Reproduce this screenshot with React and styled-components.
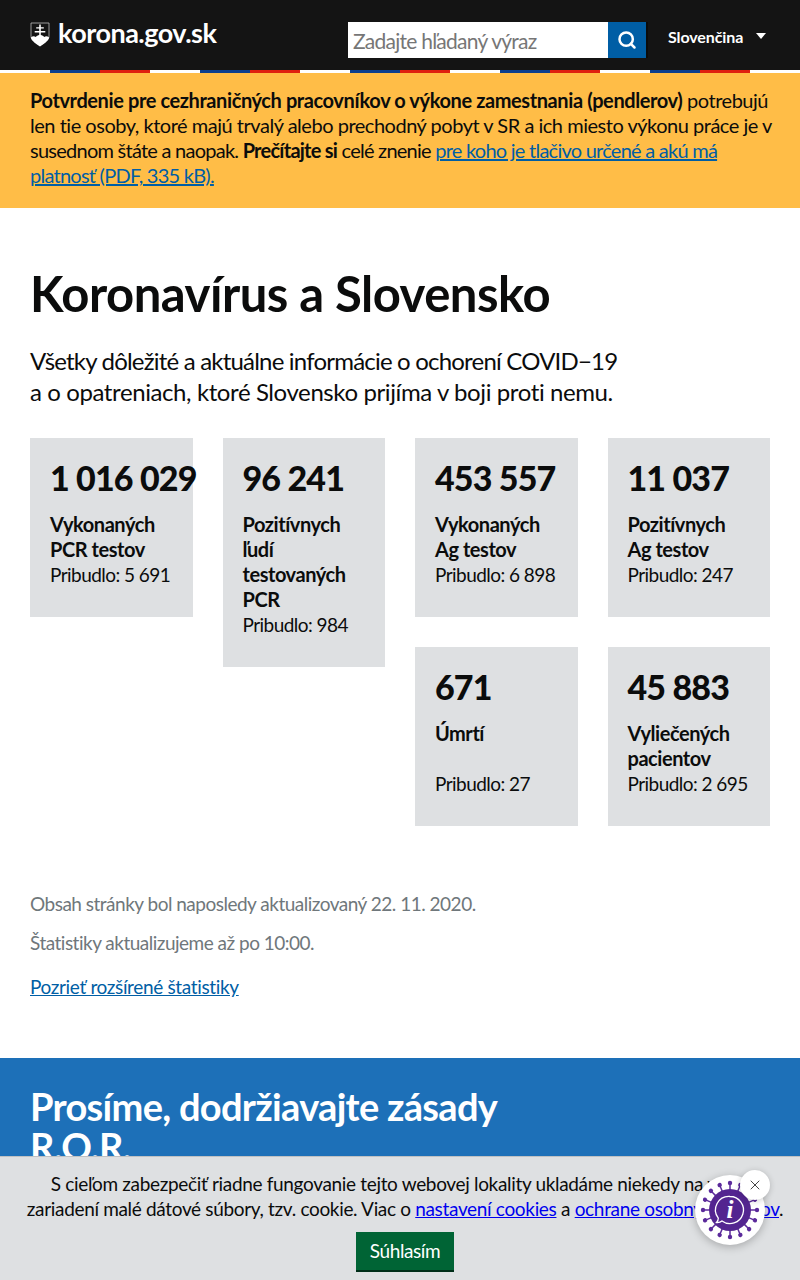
import React from "react";
import styled, { createGlobalStyle } from "styled-components";
import { Search, X } from "lucide-react";

const GlobalStyle = createGlobalStyle`
  html, body {
    margin: 0;
    padding: 0;
    background: #fff;
    color: #0b0c0c;
    font-family: Lato, "Noto Sans", sans-serif;
    font-size: 20px;
    line-height: 25px;
    letter-spacing: -0.45px;
  }
  * { box-sizing: border-box; }
`;

const Page = styled.div`
  position: relative;
  height: 1280px;
  overflow: hidden;
`;

const Header = styled.header`
  height: 70px;
  padding: 22px 30px 0;
  display: flex;
  align-items: flex-start;
  background: #141414;
`;

const Stripe = styled.div`
  height: 3px;
  background: repeating-linear-gradient(
    90deg,
    #fff 0 50px,
    #0b3e8f 50px 100px,
    #df2010 100px 150px
  );
`;

const Logo = styled.a`
  display: flex;
  align-items: center;
  gap: 8px;
  height: 24px;
  margin-top: -2px;
  color: #fff;
  font-size: 27px;
  font-weight: 700;
  letter-spacing: -0.5px;
  svg { margin-top: 4px; }
`;

const SearchForm = styled.form`
  display: flex;
  margin-left: auto;
  margin-right: 22px;
  box-shadow: 2px 0 0 #0b0c0c;
`;

const SearchInput = styled.input`
  width: 260px;
  height: 36px;
  padding: 0 5px;
  border: 0;
  border-radius: 0;
  background: #fff;
  font: 21px Lato, sans-serif;
  letter-spacing: -0.75px;
  &::placeholder { color: #767676; opacity: 1; }
`;

const SearchButton = styled.button`
  width: 38px;
  height: 36px;
  display: flex;
  align-items: center;
  justify-content: center;
  padding: 0;
  border: 0;
  background: #005ea5;
  color: #fff;
`;

const Language = styled.div`
  display: flex;
  align-items: center;
  gap: 13px;
  width: 102px;
  height: 28px;
  color: #fff;
  font-size: 16px;
  font-weight: 700;
  letter-spacing: -0.1px;
`;

const Caret = styled.span`
  width: 0;
  height: 0;
  border-left: 5px solid transparent;
  border-right: 5px solid transparent;
  border-top: 6px solid #fff;
  margin-top: -1px;
`;

const Notice = styled.section`
  padding: 15px 30px 20px;
  background: #ffbd47;
  white-space: nowrap;
  letter-spacing: -0.48px;
  b { letter-spacing: -0.4px; }
  a { color: #005ea5; }
`;

const TightText = styled.span`
  letter-spacing: -0.75px;
  b { letter-spacing: -0.75px; }
`;

const Main = styled.main`
  padding: 55px 30px 0;
`;

const Title = styled.h1`
  margin: 0;
  font-size: 49px;
  line-height: 60px;
  font-weight: 700;
  letter-spacing: -0.5px;
`;

const Lead = styled.p`
  margin: 22px 0 0;
  font-size: 24px;
  line-height: 31px;
`;

const LeadLine = styled.span`
  display: block;
  letter-spacing: ${(p) => (p.$tight ? "-0.8px" : "-0.4px")};
`;

const Stats = styled.div`
  display: grid;
  grid-template-columns: minmax(0, 1fr) minmax(0, 1fr);
  gap: 30px;
  margin-top: 31px;
`;

const StatGroup = styled.div`
  display: grid;
  grid-template-columns: minmax(0, 1fr) minmax(0, 1fr);
  gap: 30px;
  align-items: start;
`;

const StatCard = styled.div`
  padding: 20px 0 30px 20px;
  background: #dee0e2;
`;

const StatNumber = styled.div`
  height: 42px;
  margin-bottom: 12px;
  font-size: 34px;
  line-height: 40px;
  font-weight: 900;
  white-space: nowrap;
  letter-spacing: -0.85px;
`;

const StatLabel = styled.div`
  min-height: ${(p) => p.$lines * 25}px;
  font-weight: 700;
`;

const StatMore = styled.div`
  font-size: 19px;
  letter-spacing: -0.55px;
  white-space: nowrap;
`;

const Meta = styled.p`
  margin: ${(p) => p.$gap}px 0 0;
  color: #6f777b;
  font-size: 19px;
  letter-spacing: -0.5px;
`;

const BlueLink = styled.a`
  display: block;
  margin-top: 19px;
  color: #005ea5;
  font-size: 19px;
  letter-spacing: -0.35px;
  text-decoration: underline;
`;

const Rules = styled.section`
  margin-top: 59px;
  padding: 28px 30px 0;
  background: #1d70b8;
  color: #fff;
  height: 240px;
`;

const RulesTitle = styled.h2`
  margin: 0;
  max-width: 500px;
  font-size: 38px;
  line-height: 40px;
  font-weight: 700;
  letter-spacing: -0.7px;
`;

const CookieBar = styled.div`
  position: absolute;
  left: 0;
  right: 0;
  bottom: 0;
  height: 124px;
  padding: 14px 0 0 10px;
  background: #dee0e2;
  border-top: 1px solid #bfc1c3;
  text-align: center;
  font-size: 19px;
  letter-spacing: -0.33px;
  white-space: nowrap;
  a { color: #00e; }
`;

const AgreeButton = styled.button`
  display: block;
  width: 98px;
  height: 40px;
  margin: 11px auto 0;
  padding: 0;
  border: 0;
  border-bottom: 2px solid #002d18;
  background: #006435;
  color: #fff;
  font: 19px/38px Lato, sans-serif;
  letter-spacing: -0.4px;
`;

const InfoBubble = styled.button`
  position: absolute;
  left: 695px;
  top: 1175px;
  width: 70px;
  height: 70px;
  padding: 0;
  display: flex;
  align-items: center;
  justify-content: center;
  border: 0;
  border-radius: 50%;
  background: #fff;
  box-shadow: 0 2px 8px rgba(0, 0, 0, 0.25);
`;

const CloseBubble = styled.button`
  position: absolute;
  left: 740px;
  top: 1170px;
  width: 30px;
  height: 30px;
  padding: 0;
  display: flex;
  align-items: center;
  justify-content: center;
  border: 0;
  border-radius: 50%;
  background: #fff;
  color: #444;
  box-shadow: 0 1px 6px rgba(0, 0, 0, 0.2);
`;

const stats = [
  [
    { n: "1 016 029", label: ["Vykonaných", "PCR testov"], more: "5 691" },
    { n: "96 241", label: ["Pozitívnych", "ľudí", "testovaných", "PCR"], more: "984" },
  ],
  [
    { n: "453 557", label: ["Vykonaných", "Ag testov"], more: "6 898" },
    { n: "11 037", label: ["Pozitívnych", "Ag testov"], more: "247" },
    { n: "671", label: ["Úmrtí"], lines: 2, more: "27" },
    { n: "45 883", label: ["Vyliečených", "pacientov"], more: "2 695" },
  ],
];

const Crest = () => (
  <svg width="20" height="25" viewBox="0 0 20 25">
    <path d="M1 1h18v13c0 4-4 6-9 9.500C5 20 1 18 1 14z" fill="none" stroke="#bbb" strokeWidth="0.8" />
    <path d="M0.800 15.500c2-1.500 3.500-1.500 5-.5 1-1.500 3-2 4.200-2s3.200.5 4.200 2c1.500-1 3-1 5 .5C18 19.500 14 21.500 10 24.500 6 21.500 2 19.500.8 15.500z" fill="#fff" />
    <path d="M9.200 2.500h1.600v2.700h3v1.400h-3v2.400h4.500v1.400h-4.500v3.600H9.200V10.400H4.700V9h4.500V6.600h-3V5.200h3z" fill="#fff" />
  </svg>
);

const spikes = Array.from({ length: 16 }, (_, i) => (i * 360) / 16);

const VirusIcon = () => (
  <svg width="60" height="60" viewBox="0 0 60 60">
    {spikes.map((a) => (
      <g key={a} transform={`rotate(${a} 30 30)`}>
        <line x1="30" y1="10" x2="30" y2="3.500" stroke="#5b2a9b" strokeWidth="1.500" />
        <circle cx="30" cy="3" r="2.200" fill="#5b2a9b" />
      </g>
    ))}
    <circle cx="30" cy="30" r="21" fill="#532590" />
    <path
      d="M30 16.500a13.500 13.500 0 1 1-8 24.400c-1.500 1.300-3.500 1.800-5.500 1.600 1.200-1.200 1.800-2.600 1.800-4.300A13.500 13.500 0 0 1 30 16.500z"
      fill="none"
      stroke="#fff"
      strokeWidth="1.300"
    />
    <text x="30" y="38" textAnchor="middle" fontFamily="Liberation Serif, serif" fontStyle="italic" fontWeight="700" fontSize="25" fill="#fff">
      i
    </text>
  </svg>
);

const App = () => (
  <Page>
    <GlobalStyle />
    <Header>
      <Logo>
        <Crest />
        korona.gov.sk
      </Logo>
      <SearchForm>
        <SearchInput placeholder="Zadajte hľadaný výraz" />
        <SearchButton type="button" aria-label="Hľadať">
          <Search size={20} strokeWidth={3} />
        </SearchButton>
      </SearchForm>
      <Language>
        Slovenčina
        <Caret />
      </Language>
    </Header>
    <Stripe />

    <Notice>
      <b>Potvrdenie pre cezhraničných pracovníkov o výkone zamestnania (pendlerov)</b> potrebujú
      <br />
      len tie osoby, ktoré majú trvalý alebo prechodný pobyt v SR a ich miesto výkonu práce je v
      <br />
      <TightText>
        susednom štáte a naopak. <b>Prečítajte si</b> celé znenie{" "}
        <a href="#pdf">
          pre koho je tlačivo určené a akú má
          <br />
          platnosť (PDF, 335 kB).
        </a>
      </TightText>
    </Notice>

    <Main>
      <Title>Koronavírus a Slovensko</Title>
      <Lead>
        <LeadLine $tight>Všetky dôležité a aktuálne informácie o ochorení COVID−19</LeadLine>
        <LeadLine>a o opatreniach, ktoré Slovensko prijíma v boji proti nemu.</LeadLine>
      </Lead>
      <Stats>
        {stats.map((group, i) => (
          <StatGroup key={i}>
            {group.map((s) => (
              <StatCard key={s.n}>
                <StatNumber>{s.n}</StatNumber>
                <StatLabel $lines={s.lines || s.label.length}>
                  {s.label.map((line) => (
                    <div key={line}>{line}</div>
                  ))}
                </StatLabel>
                <StatMore>Pribudlo: {s.more}</StatMore>
              </StatCard>
            ))}
          </StatGroup>
        ))}
      </Stats>
      <Meta $gap={65}>Obsah stránky bol naposledy aktualizovaný 22. 11. 2020.</Meta>
      <Meta $gap={14}>Štatistiky aktualizujeme až po 10:00.</Meta>
      <BlueLink href="#stats">Pozrieť rozšírené štatistiky</BlueLink>
    </Main>

    <Rules>
      <RulesTitle>Prosíme, dodržiavajte zásady R.O.R.</RulesTitle>
    </Rules>

    <CookieBar>
      S cieľom zabezpečiť riadne fungovanie tejto webovej lokality ukladáme niekedy na vašom
      <br />
      zariadení malé dátové súbory, tzv. cookie. Viac o <a href="#c">nastavení cookies</a> a{" "}
      <a href="#o">ochrane osobných údajov</a>.
      <AgreeButton type="button">Súhlasím</AgreeButton>
    </CookieBar>
    <InfoBubble type="button" aria-label="Informácie">
      <VirusIcon />
    </InfoBubble>
    <CloseBubble type="button" aria-label="Zavrieť">
      <X size={16} strokeWidth={1.5} />
    </CloseBubble>
  </Page>
);

export default App;
